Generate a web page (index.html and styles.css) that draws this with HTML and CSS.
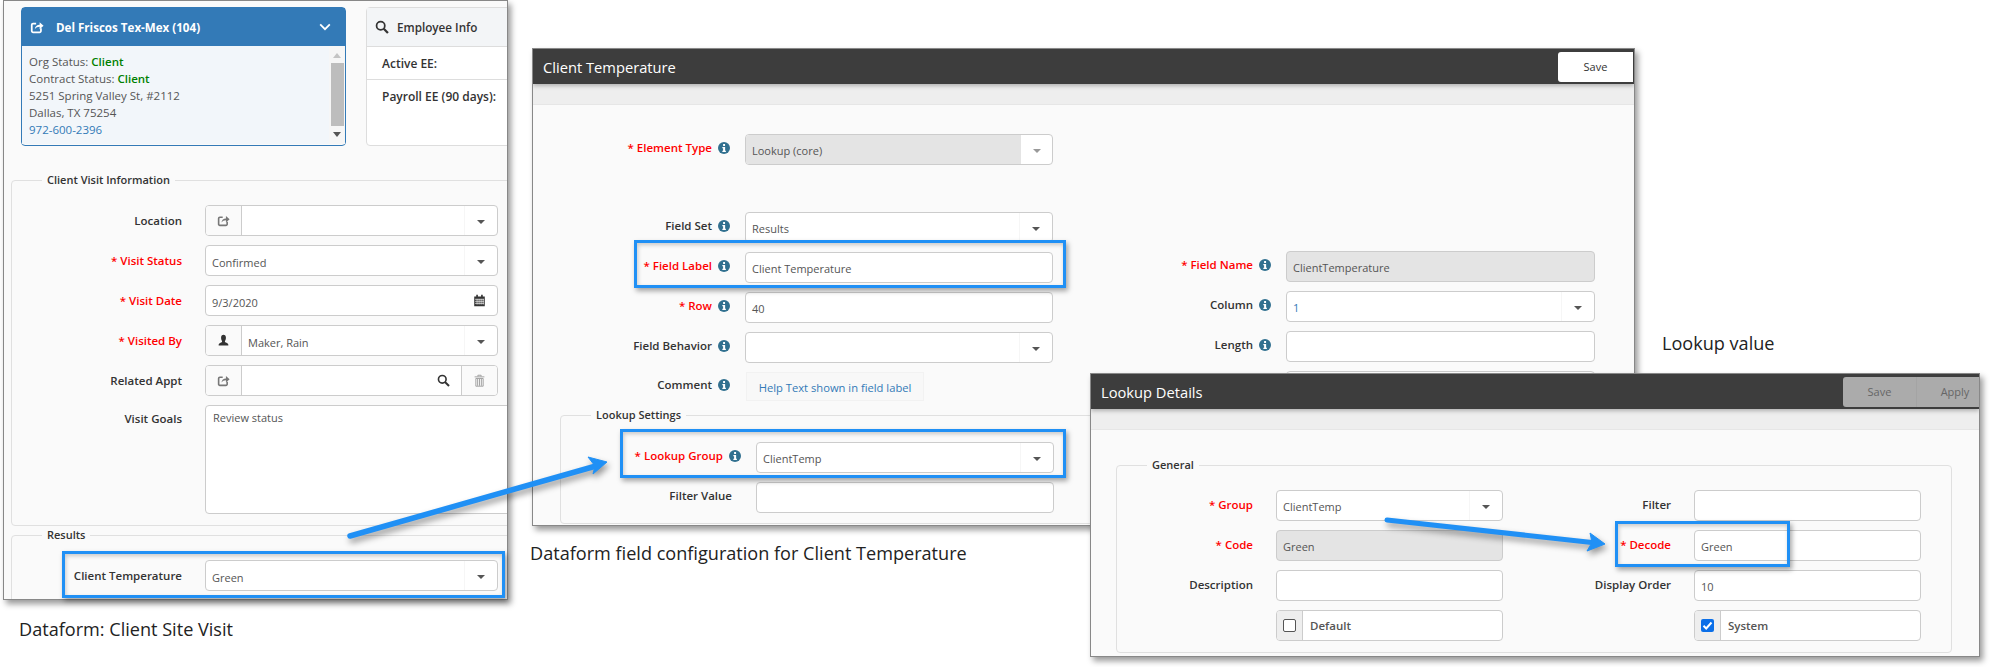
FILE: index.html
```html
<!DOCTYPE html>
<html lang="en">
<head>
    <meta charset="UTF-8">
    <title>Client Temperature lookup</title>
    <link rel="stylesheet" href="styles.css">
</head>
<body>
    <!-- Iconos -->
    <svg class="icon-defs" aria-hidden="true">
        <symbol id="i-share" viewBox="0 0 16 16">
            <path d="M12.5 9.5v3A1.5 1.5 0 0 1 11 14H3.5A1.5 1.5 0 0 1 2 12.500V5.500A1.500 1.500 0 0 1 3.500 4H7" fill="none" stroke="currentColor" stroke-width="2"/>
            <path d="M5.500 10.500C5.800 7.500 8 5.500 11 5.500V2.500L15.500 6.500 11 10.500V7.800C8.800 7.800 7 8.800 5.500 10.500Z" fill="currentColor"/>
        </symbol>
        <symbol id="i-chevron" viewBox="0 0 16 16">
            <path d="M2.500 5 8 10.500 13.500 5" fill="none" stroke="currentColor" stroke-width="2"/>
        </symbol>
        <symbol id="i-search" viewBox="0 0 16 16">
            <circle cx="6.500" cy="6.500" r="4.700" fill="none" stroke="currentColor" stroke-width="2"/>
            <path d="M10 10l4.800 4.800" stroke="currentColor" stroke-width="2.600"/>
        </symbol>
        <symbol id="i-cal" viewBox="0 0 16 16">
            <path d="M4 1h2v2h4V1h2v2h2.500v12h-13V3H4Z" fill="currentColor"/>
            <path d="M2.500 6.500h11M2.500 9h11M2.500 11.500h11M5 6v7M7.500 6v7M10 6v7M12.500 6v7" stroke="#fff" stroke-width=".8"/>
        </symbol>
        <symbol id="i-user" viewBox="0 0 16 16">
            <path d="M8 1c1.900 0 3 1.400 3 3.500S10 8 9.700 9c0 1 .8 1.300 2 1.900 1.500.7 2.300 1.300 2.300 3.100H2c0-1.800.8-2.400 2.300-3.100 1.200-.6 2-.9 2-1.900C6 8 5 6.600 5 4.500S6.100 1 8 1Z" fill="currentColor"/>
        </symbol>
        <symbol id="i-trash" viewBox="0 0 16 16">
            <path d="M2 3.500h12M6 3V1.500h4V3M3.500 5.500h9V15h-9ZM5.700 6v8.500M8 6v8.500M10.300 6v8.500" fill="none" stroke="currentColor" stroke-width="1.100"/>
        </symbol>
        <symbol id="i-info" viewBox="0 0 16 16">
            <circle cx="8" cy="8" r="8" fill="currentColor"/>
            <path d="M6.800 2.800h2.600v2.500H6.800ZM5.800 6.500h3.700v5h1v1.800H5.800v-1.800h1V8.300h-1Z" fill="#fff"/>
        </symbol>
    </svg>

    <!-- Dataform: Client Site Visit -->
    <section class="window window-visit">
        <div class="cards">
            <div class="card card-client">
                <div class="card-head">
                    <svg class="icon-head"><use href="#i-share"/></svg>
                    <span class="card-title">Del Friscos Tex-Mex (104)</span>
                    <svg class="icon-chevron"><use href="#i-chevron"/></svg>
                </div>
                <div class="card-body">
                    <div class="card-text">
                        <div>Org Status: <b class="status">Client</b></div>
                        <div>Contract Status: <b class="status">Client</b></div>
                        <div>5251 Spring Valley St, #2112</div>
                        <div>Dallas, TX 75254</div>
                        <div class="phone">972-600-2396</div>
                    </div>
                    <div class="scrollbar">
                        <span class="scroll-up"></span>
                        <span class="scroll-thumb"></span>
                        <span class="scroll-down"></span>
                    </div>
                </div>
            </div>
            <div class="card card-employee">
                <div class="card-head">
                    <svg class="icon-head"><use href="#i-search"/></svg>
                    <span>Employee Info</span>
                </div>
                <div class="ee-row">Active EE:</div>
                <div class="ee-row">Payroll EE (90 days):</div>
            </div>
        </div>

        <fieldset class="group group-visit">
            <legend>Client Visit Information</legend>
            <div class="row">
                <label class="lbl">Location</label>
                <div class="ctl">
                    <span class="addon"><svg class="icon-gray"><use href="#i-share"/></svg></span>
                    <span class="val"></span>
                    <span class="caret"></span>
                </div>
            </div>
            <div class="row">
                <label class="lbl req">* Visit Status</label>
                <div class="ctl"><span class="val">Confirmed</span><span class="caret"></span></div>
            </div>
            <div class="row">
                <label class="lbl req">* Visit Date</label>
                <div class="ctl">
                    <span class="val">9/3/2020</span>
                    <span class="end-icon"><svg class="icon-dark"><use href="#i-cal"/></svg></span>
                </div>
            </div>
            <div class="row">
                <label class="lbl req">* Visited By</label>
                <div class="ctl">
                    <span class="addon"><svg class="icon-dark"><use href="#i-user"/></svg></span>
                    <span class="val">Maker, Rain</span>
                    <span class="caret"></span>
                </div>
            </div>
            <div class="row">
                <label class="lbl">Related Appt</label>
                <div class="ctl">
                    <span class="addon"><svg class="icon-gray"><use href="#i-share"/></svg></span>
                    <span class="val"></span>
                    <span class="end-icon"><svg class="icon-dark"><use href="#i-search"/></svg></span>
                    <span class="addon addon-end"><svg class="icon-gray"><use href="#i-trash"/></svg></span>
                </div>
            </div>
            <div class="row row-tall">
                <label class="lbl">Visit Goals</label>
                <div class="ctl ctl-area">Review status</div>
            </div>
        </fieldset>

        <fieldset class="group group-results">
            <legend>Results</legend>
            <div class="row">
                <label class="lbl">Client Temperature</label>
                <div class="ctl"><span class="val">Green</span><span class="caret"></span></div>
            </div>
        </fieldset>
    </section>

    <!-- Dataform field configuration -->
    <section class="window window-field">
        <header class="win-head">
            <h2>Client Temperature</h2>
            <div class="win-buttons"><button class="btn btn-save">Save</button></div>
        </header>
        <div class="win-band"></div>
        <div class="win-body">
            <div class="columns">
                <div class="col col-left">
                    <div class="row row-first">
                        <div class="lbl-box"><label class="lbl req">* Element Type</label><svg class="icon-info"><use href="#i-info"/></svg></div>
                        <div class="ctl ctl-locked"><span class="val">Lookup (core)</span><span class="caret caret-soft"></span></div>
                    </div>
                    <div class="row">
                        <div class="lbl-box"><label class="lbl">Field Set</label><svg class="icon-info"><use href="#i-info"/></svg></div>
                        <div class="ctl"><span class="val">Results</span><span class="caret"></span></div>
                    </div>
                    <div class="row">
                        <div class="lbl-box"><label class="lbl req">* Field Label</label><svg class="icon-info"><use href="#i-info"/></svg></div>
                        <div class="ctl"><span class="val">Client Temperature</span></div>
                    </div>
                    <div class="row">
                        <div class="lbl-box"><label class="lbl req">* Row</label><svg class="icon-info"><use href="#i-info"/></svg></div>
                        <div class="ctl"><span class="val">40</span></div>
                    </div>
                    <div class="row">
                        <div class="lbl-box"><label class="lbl">Field Behavior</label><svg class="icon-info"><use href="#i-info"/></svg></div>
                        <div class="ctl"><span class="val"></span><span class="caret"></span></div>
                    </div>
                    <div class="row row-comment">
                        <div class="lbl-box"><label class="lbl">Comment</label><svg class="icon-info"><use href="#i-info"/></svg></div>
                        <div class="help-text">Help Text shown in field label</div>
                    </div>
                </div>
                <div class="col col-right">
                    <div class="row">
                        <div class="lbl-box"><label class="lbl req">* Field Name</label><svg class="icon-info"><use href="#i-info"/></svg></div>
                        <div class="ctl ctl-disabled"><span class="val">ClientTemperature</span></div>
                    </div>
                    <div class="row">
                        <div class="lbl-box"><label class="lbl">Column</label><svg class="icon-info"><use href="#i-info"/></svg></div>
                        <div class="ctl"><span class="val val-link">1</span><span class="caret"></span></div>
                    </div>
                    <div class="row">
                        <div class="lbl-box"><label class="lbl">Length</label><svg class="icon-info"><use href="#i-info"/></svg></div>
                        <div class="ctl"><span class="val"></span></div>
                    </div>
                    <div class="row">
                        <div class="lbl-box"></div>
                        <div class="ctl"><span class="val"></span></div>
                    </div>
                </div>
            </div>
            <fieldset class="group group-lookup">
                <legend>Lookup Settings</legend>
                <div class="row">
                    <div class="lbl-box"><label class="lbl req">* Lookup Group</label><svg class="icon-info"><use href="#i-info"/></svg></div>
                    <div class="ctl"><span class="val">ClientTemp</span><span class="caret"></span></div>
                </div>
                <div class="row">
                    <div class="lbl-box lbl-plain"><label class="lbl">Filter Value</label></div>
                    <div class="ctl"><span class="val"></span></div>
                </div>
            </fieldset>
        </div>
    </section>

    <!-- Lookup value -->
    <section class="window window-lookup">
        <header class="win-head">
            <h2>Lookup Details</h2>
            <div class="win-buttons win-buttons-off">
                <button class="btn btn-off">Save</button>
                <button class="btn btn-off">Apply</button>
            </div>
        </header>
        <div class="win-band"></div>
        <div class="win-body">
            <fieldset class="group group-general">
                <legend>General</legend>
                <div class="columns">
                    <div class="col col-a">
                        <div class="row">
                            <label class="lbl req">* Group</label>
                            <div class="ctl"><span class="val">ClientTemp</span><span class="caret"></span></div>
                        </div>
                        <div class="row">
                            <label class="lbl req">* Code</label>
                            <div class="ctl ctl-disabled"><span class="val">Green</span></div>
                        </div>
                        <div class="row">
                            <label class="lbl">Description</label>
                            <div class="ctl"><span class="val"></span></div>
                        </div>
                        <div class="row">
                            <label class="lbl"></label>
                            <div class="ctl">
                                <span class="check-addon"><span class="check"></span></span>
                                <span class="val val-bold">Default</span>
                            </div>
                        </div>
                    </div>
                    <div class="col col-b">
                        <div class="row">
                            <label class="lbl">Filter</label>
                            <div class="ctl"><span class="val"></span></div>
                        </div>
                        <div class="row">
                            <label class="lbl req">* Decode</label>
                            <div class="ctl"><span class="val">Green</span></div>
                        </div>
                        <div class="row">
                            <label class="lbl">Display Order</label>
                            <div class="ctl"><span class="val">10</span></div>
                        </div>
                        <div class="row">
                            <label class="lbl"></label>
                            <div class="ctl">
                                <span class="check-addon">
                                    <span class="check check-on">
                                        <svg viewBox="0 0 13 13"><path d="M2.500 6.800 5.200 9.500 10.500 3.500" fill="none" stroke="#fff" stroke-width="2"/></svg>
                                    </span>
                                </span>
                                <span class="val val-bold">System</span>
                            </div>
                        </div>
                    </div>
                </div>
            </fieldset>
        </div>
    </section>

    <!-- Anotaciones encima de las ventanas -->
    <p class="note note-visit">Dataform: Client Site Visit</p>
    <p class="note note-field">Dataform field configuration for Client Temperature</p>
    <p class="note note-lookup">Lookup value</p>

    <div class="mark mark-temp"></div>
    <div class="mark mark-label"></div>
    <div class="mark mark-group"></div>
    <div class="mark mark-decode"></div>

    <svg class="arrows" viewBox="0 0 1990 667">
        <path d="M350 536 596 466" fill="none" stroke="#2090f5" stroke-width="5.500" stroke-linecap="round"/>
        <path d="M607 462 588 457 595 466 593 474Z" fill="#2090f5" stroke="#2090f5" stroke-width="1"/>
        <path d="M1387 520 1592 542.500" fill="none" stroke="#2090f5" stroke-width="5" stroke-linecap="round"/>
        <path d="M1605 544 1590 533 1592 542.500 1587 551Z" fill="#2090f5" stroke="#2090f5" stroke-width="1"/>
    </svg>
</body>
</html>
```

FILE: styles.css
```css
/* Pagina */
html, body {
    margin: 0;
    padding: 0;
    background: #fff;
}
body {
    position: relative;
    width: 1990px;
    height: 667px;
    overflow: hidden;
    font-family: "Open Sans", "Noto Sans", Arial, sans-serif;
    font-size: 11px;
    color: #555;
}
.icon-defs {
    display: none;
}

/* Ventanas */
.window {
    position: absolute;
    box-sizing: border-box;
    background: #fafafa;
    border: 1px solid #888;
    box-shadow: 3px 4px 6px rgba(0, 0, 0, 0.4);
    overflow: hidden;
}
.window-visit {
    left: 3px;
    top: 0;
    width: 505px;
    height: 600px;
    padding-top: 6px;
}
.window-field {
    left: 532px;
    top: 48px;
    width: 1103px;
    height: 478px;
}
.window-lookup {
    left: 1090px;
    top: 373px;
    width: 890px;
    height: 284px;
}
.win-head {
    display: flex;
    justify-content: space-between;
    align-items: center;
    height: 35px;
    background: #3d3d3d;
    box-shadow: 0 2px 4px rgba(0, 0, 0, 0.25);
    position: relative;
}
.win-head h2 {
    margin: 0 0 0 10px;
    font-size: 14.700px;
    font-weight: 400;
    color: #fff;
}
.win-buttons {
    display: flex;
    margin-right: 1px;
}
.btn {
    font: inherit;
    height: 30px;
    border: 0;
    border-radius: 3px 0 0 3px;
    background: #fff;
    color: #333;
    width: 75px;
    padding: 0;
}
.btn-off {
    background: #ababab;
    color: #666;
    width: 74px;
    border-radius: 0;
}
.win-buttons-off {
    margin-right: 0;
}
.win-buttons-off .btn:first-child {
    border-radius: 3px 0 0 3px;
    border-right: 1px solid #a4a4a4;
}
.win-buttons-off .btn:last-child {
    width: 62px;
    padding-left: 14px;
}
.win-band {
    height: 20px;
    background: #eee;
    border-bottom: 1px solid #e6e6e6;
}
.win-body {
    background: #fafafa;
}

/* Tarjetas */
.cards {
    display: flex;
    gap: 20px;
    margin-left: 17px;
    width: 520px;
}
.card {
    box-sizing: border-box;
    height: 139px;
    border-radius: 4px;
    flex: none;
}
.card-client {
    width: 325px;
    border: 1px solid #337ab7;
}
.card-employee {
    width: 200px;
    background: #fff;
    border: 1px solid #ddd;
    color: #333;
}
.card-head {
    display: flex;
    align-items: center;
    height: 38px;
    font-size: 12px;
    font-weight: 600;
}
.card-client .card-head {
    background: #337ab7;
    color: #fff;
    padding: 0 13px 0 8px;
}
.card-title {
    flex: 1;
    margin-left: 12px;
    font-size: 11.600px;
    font-weight: 700;
}
.card-employee .card-head {
    background: #f3f5f7;
    border-bottom: 1px solid #ddd;
    padding-left: 8px;
}
.card-employee .card-head span {
    margin-left: 8px;
    font-size: 11.700px;
}
.icon-head {
    width: 14px;
    height: 14px;
}
.icon-chevron {
    width: 14px;
    height: 14px;
}
.card-body {
    display: flex;
    height: 98px;
    background: #f2f6fa;
}
.card-text {
    flex: 1;
    padding: 7px 0 0 7px;
    line-height: 17px;
    font-size: 11.500px;
    color: #555;
}
.status {
    color: #008000;
    font-weight: 600;
}
.phone {
    color: #337ab7;
}
.scrollbar {
    display: flex;
    flex-direction: column;
    align-items: center;
    width: 16px;
    background: #f6f6f6;
}
.scroll-up {
    margin: 7px 0 5px;
    border: 4px solid transparent;
    border-top: 0;
    border-bottom: 5px solid #c4c4c4;
}
.scroll-thumb {
    width: 13px;
    height: 63px;
    background: #bdbdbd;
}
.scroll-down {
    margin-top: 6px;
    border: 4px solid transparent;
    border-bottom: 0;
    border-top: 5px solid #555;
}
.ee-row {
    height: 33px;
    padding: 8px 0 0 15px;
    box-sizing: border-box;
    font-size: 12px;
    font-weight: 600;
    border-bottom: 1px solid #ddd;
}
.ee-row:last-child {
    border-bottom: 0;
}

/* Fieldsets */
.group {
    margin: 0;
    padding: 0;
    border: 1px solid #e0e0e0;
    border-radius: 4px;
    box-sizing: border-box;
}
.group legend {
    margin-left: 30px;
    padding: 0 5px;
    font-size: 11px;
    font-weight: 600;
    line-height: 16px;
    color: #333;
}
.group-visit {
    margin: 26px 0 0 7px;
    width: 520px;
    height: 354px;
    padding-top: 17px;
}
.group-results {
    margin: 1px 0 0 7px;
    width: 520px;
    height: 90px;
    padding-top: 17px;
}
.group-lookup {
    margin: 5px 0 0 27px;
    width: 1060px;
    height: 117px;
    padding-top: 19px;
}
.group-general {
    margin: 27px 0 0 25px;
    width: 836px;
    height: 196px;
    padding-top: 17px;
}

/* Filas */
.columns {
    display: flex;
}
.row {
    display: flex;
    align-items: center;
    height: 31px;
    margin-bottom: 9px;
}
.row:last-child {
    margin-bottom: 0;
}
.lbl {
    font-size: 11.500px;
    font-weight: 600;
    color: #333;
    text-align: right;
}
.req {
    color: #f00;
}
.ctl {
    display: flex;
    box-sizing: border-box;
    height: 31px;
    background: #fff;
    border: 1px solid #ccc;
    border-radius: 4px;
    overflow: hidden;
    flex: none;
}
.val {
    flex: 1;
    align-self: center;
    padding: 2px 0 0 6px;
    white-space: nowrap;
}
.val-link {
    color: #337ab7;
}
.val-bold {
    font-size: 11.500px;
    font-weight: 600;
    padding: 0 0 0 7px;
}
.addon {
    display: flex;
    align-items: center;
    justify-content: center;
    width: 35px;
    background: #fafafa;
    border-right: 1px solid #ccc;
}
.addon-end {
    border-right: 0;
    border-left: 1px solid #ccc;
}
.end-icon {
    display: flex;
    align-items: center;
    justify-content: center;
    width: 36px;
}
.caret {
    display: flex;
    align-items: center;
    justify-content: center;
    box-sizing: border-box;
    width: 33px;
    padding-top: 2px;
    border-left: 1px solid #f6f6f6;
}
.caret::after {
    content: "";
    border: 4px solid transparent;
    border-bottom: 0;
    border-top: 4px solid #555;
}
.caret-soft {
    width: 31px;
    border-left: 0;
}
.caret-soft::after {
    border-top-color: #999;
}
.icon-gray {
    width: 13px;
    height: 13px;
    color: #777;
}
.icon-dark {
    width: 13px;
    height: 13px;
    color: #333;
}
.addon-end .icon-gray {
    color: #999;
}

/* Formulario de visita */
.group-visit .lbl,
.group-results .lbl {
    width: 170px;
    margin-right: 23px;
}
.group-visit .val,
.group-results .val {
    padding-top: 3px;
}
.group-visit .ctl,
.group-results .ctl {
    width: 293px;
}
.row-tall {
    align-items: flex-start;
    height: 108px;
}
.row-tall .lbl {
    padding-top: 6px;
}
.group-visit .ctl-area {
    width: 320px;
    height: 109px;
    padding: 4px 7px;
    display: block;
}

/* Formulario de campo */
.lbl-box {
    display: flex;
    justify-content: flex-end;
    align-items: center;
    gap: 6px;
    flex: none;
    padding-bottom: 4px;
}
.icon-info {
    width: 12px;
    height: 12px;
    color: #31708f;
}
.col-left {
    width: 521px;
    padding-top: 29px;
}
.col-left .lbl-box {
    width: 197px;
    margin-right: 15px;
}
.col-left .ctl {
    width: 308px;
}
.col-left .row-first {
    margin-bottom: 47px;
}
.col-right {
    padding-top: 146px;
}
.col-right .lbl-box {
    width: 217px;
    margin-right: 15px;
}
.col-right .ctl {
    width: 309px;
}
.row-comment {
    height: 29px;
}
.help-text {
    box-sizing: border-box;
    width: 178px;
    height: 29px;
    margin-left: 1px;
    padding-top: 7px;
    font-size: 11.200px;
    text-align: center;
    color: #337ab7;
    background: #f8f8f8;
    border: 1px solid #f2f2f2;
}
.ctl-locked .val {
    align-self: stretch;
    display: flex;
    align-items: center;
    background: #e4e4e4;
}
.ctl-disabled {
    background: #e4e4e4;
}
.group-lookup .lbl-box {
    width: 180px;
    margin-right: 15px;
}
.group-lookup .lbl-plain {
    width: 171px;
    margin-right: 24px;
}
.group-lookup .ctl {
    width: 298px;
}

/* Lookup Details */
.group-general .lbl {
    padding-bottom: 2px;
}
.col-a {
    width: 386px;
}
.col-a .lbl {
    width: 136px;
    margin-right: 23px;
}
.col-a .ctl {
    width: 227px;
}
.col-b .lbl {
    width: 168px;
    margin-right: 23px;
}
.col-b .ctl {
    width: 227px;
}
.check-addon {
    display: flex;
    align-items: center;
    justify-content: center;
    width: 25px;
    background: #eee;
    border-right: 1px solid #ccc;
}
.check {
    box-sizing: border-box;
    width: 13px;
    height: 13px;
    background: #fff;
    border: 1px solid #555;
    border-radius: 2px;
}
.check-on {
    background: #0b6fe8;
    border: 0;
}
.check-on svg {
    display: block;
}

/* Notas y marcas */
.note {
    position: absolute;
    margin: 0;
    font-size: 18.100px;
    line-height: 20px;
    color: #222;
    white-space: nowrap;
}
.note-visit {
    left: 19px;
    top: 619px;
}
.note-field {
    left: 530px;
    top: 543px;
}
.note-lookup {
    left: 1662px;
    top: 333px;
}
.mark {
    position: absolute;
    box-sizing: border-box;
    border: 3px solid #2090f5;
    box-shadow: 2px 3px 5px rgba(0, 0, 0, 0.35), inset 1px 2px 4px rgba(0, 0, 0, 0.2);
}
.mark-temp {
    left: 62px;
    top: 551px;
    width: 443px;
    height: 47px;
}
.mark-label {
    left: 634px;
    top: 240px;
    width: 432px;
    height: 48px;
}
.mark-group {
    left: 620px;
    top: 429px;
    width: 446px;
    height: 49px;
}
.mark-decode {
    left: 1615px;
    top: 521px;
    width: 175px;
    height: 46px;
}
.arrows {
    position: absolute;
    left: 0;
    top: 0;
    width: 1990px;
    height: 667px;
    pointer-events: none;
    filter: drop-shadow(2px 4px 3px rgba(0, 0, 0, 0.4));
}
```
